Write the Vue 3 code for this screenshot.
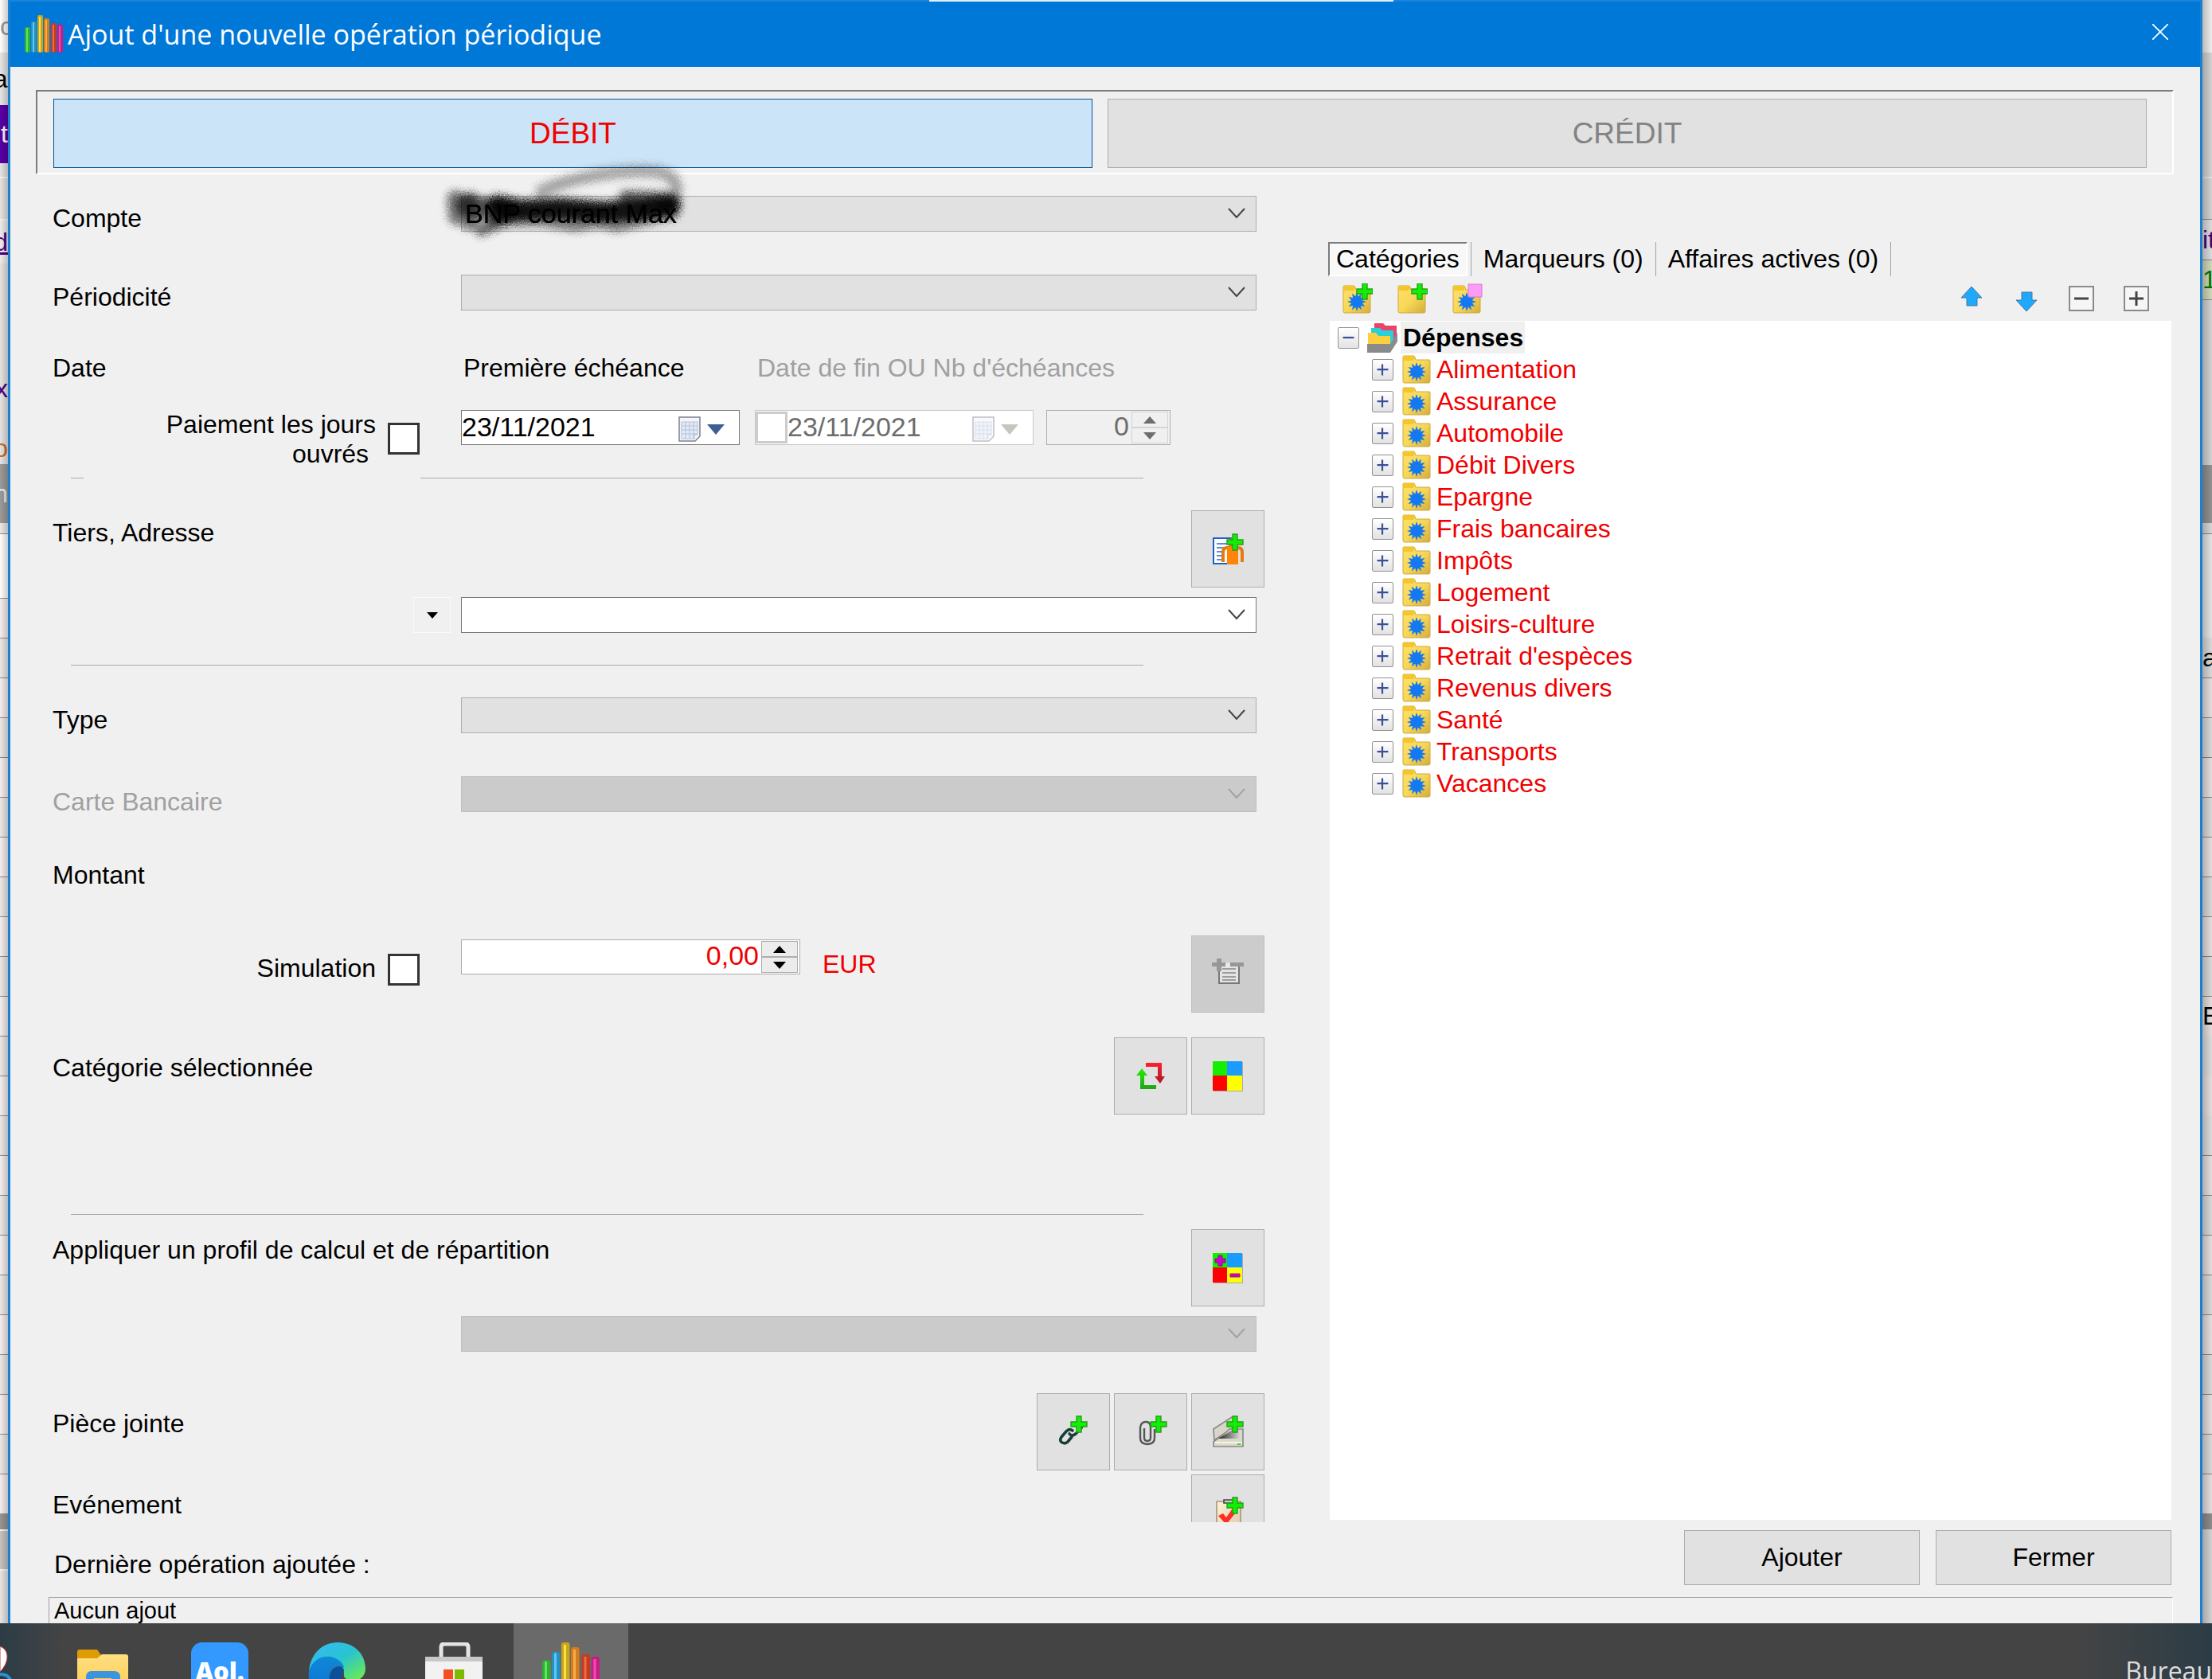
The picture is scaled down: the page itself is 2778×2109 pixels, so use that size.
<script setup>
import { ref } from 'vue'

const categories = [
  'Alimentation', 'Assurance', 'Automobile', 'Débit Divers', 'Epargne',
  'Frais bancaires', 'Impôts', 'Logement', 'Loisirs-culture',
  "Retrait d'espèces", 'Revenus divers', 'Santé', 'Transports', 'Vacances'
]

const account = ref('BNP courant Max')
const firstDate = ref('23/11/2021')
const endDate = ref('23/11/2021')
const count = ref('0')
const amount = ref('0,00')

// Twelve-pointed star used on the category folders
const star = Array.from({ length: 24 }, (_, i) => {
  const r = i % 2 ? 7 : 12
  const a = (i * Math.PI) / 12
  return `${(18 + r * Math.sin(a)).toFixed(1)},${(21 - r * Math.cos(a)).toFixed(1)}`
}).join(' ')

// Slices of the window lying behind the dialog
const rows = (n, first) =>
  Array.from({ length: n }, (_, i) => ({ h: 50, bg: (i + first) % 2 ? '#e9e9e9' : '#f5eeee', line: true }))

const leftEdge = [
  { h: 66, bg: '#ffffff', text: 'c', color: '#999', start: true },
  { h: 66, bg: '#e6e6e6', text: 'at', color: '#000', mid: true },
  { h: 73, bg: '#5a00a6', text: 't', color: '#fff' },
  { h: 17, bg: '#e4e4e4' },
  { h: 53, bg: '#e4e4e4', light: true },
  { h: 56, bg: '#ececec', text: 'd', color: '#4b0082', under: true, light: true },
  { h: 129, bg: '#e4e4e4' },
  { h: 56, bg: '#e4e4e4', text: 'x', color: '#4b0082' },
  { h: 27, bg: '#e4e4e4' },
  { h: 40, bg: '#e4e4e4', text: 'o', color: '#d2691e' },
  { h: 74, bg: '#9b9b9b', text: 'n', color: '#eee' },
  { h: 13, bg: '#e9e9e9' },
  { h: 81, bg: '#ffffff', line: true },
  ...rows(23, 0),
  { h: 20, bg: '#969696' },
  { h: 50, bg: '#c4c4c4', light: true },
  { h: 67, bg: '#e6e6e6', light: true }
]

const rightEdge = [
  { h: 66, bg: '#ffffff' },
  { h: 156, bg: '#e2e2e2' },
  { h: 53, bg: '#e2e2e2', light: true },
  { h: 51, bg: '#ececec', text: 'it', color: '#4b0082', line: true },
  { h: 50, bg: '#dde8c6', text: '1', color: '#008000', line: true },
  { h: 208, bg: '#e2e2e2', line: true },
  { h: 73, bg: '#9b9b9b' },
  { h: 13, bg: '#e6e6e6' },
  { h: 131, bg: '#f4f4f4', line: true },
  { h: 50, bg: '#e9e9e9', text: 'a', color: '#000' },
  ...rows(8, 0),
  { h: 50, bg: '#f5eeee', text: 'E', color: '#000', line: true },
  { h: 50, bg: '#ececec' },
  { h: 50, bg: '#f5eeee' },
  { h: 50, bg: '#ececec' },
  ...rows(9, 0),
  { h: 20, bg: '#969696' },
  { h: 117, bg: '#e2e2e2' }
]
</script>

<template>
  <svg class="defs" aria-hidden="true">
    <defs>
      <linearGradient id="gFolder" x1="0" y1="0" x2="1" y2="1">
        <stop offset="0" stop-color="#ffe06a" /><stop offset=".5" stop-color="#f8d858" /><stop offset="1" stop-color="#d3ad3c" />
      </linearGradient>
      <linearGradient id="gRed" x1="0" y1="0" x2="0" y2="1">
        <stop offset="0" stop-color="#ff2030" /><stop offset="1" stop-color="#a81828" />
      </linearGradient>
      <linearGradient id="gGreen" x1="0" y1="0" x2="0" y2="1">
        <stop offset="0" stop-color="#22f000" /><stop offset="1" stop-color="#20a418" />
      </linearGradient>
      <linearGradient id="gScan" x1="0" y1="0" x2="1" y2="0">
        <stop offset="0" stop-color="#222" /><stop offset="1" stop-color="#ddd" />
      </linearGradient>
      <linearGradient id="gPaper" x1="0" y1="0" x2="1" y2="1">
        <stop offset="0" stop-color="#fff4d8" /><stop offset="1" stop-color="#d9c9a8" />
      </linearGradient>
      <linearGradient id="gEdgeA" x1="0" y1="0" x2="1" y2="1">
        <stop offset="0" stop-color="#38b8f8" /><stop offset=".5" stop-color="#28c4d0" /><stop offset="1" stop-color="#78f040" />
      </linearGradient>
      <linearGradient id="gEdgeB" x1="0" y1="0" x2="0" y2="1">
        <stop offset="0" stop-color="#1088d8" /><stop offset="1" stop-color="#0a70d0" />
      </linearGradient>
      <linearGradient id="gTask" x1="0" y1="0" x2="0" y2="1">
        <stop offset="0" stop-color="#ffdf80" /><stop offset="1" stop-color="#fbc94b" />
      </linearGradient>
      <filter id="fScribble" x="-10%" y="-30%" width="120%" height="160%">
        <feGaussianBlur stdDeviation="5" result="b" />
        <feTurbulence type="fractalNoise" baseFrequency=".7" numOctaves="2" seed="4" />
        <feDisplacementMap in="b" scale="12" xChannelSelector="R" yChannelSelector="G" />
      </filter>
    </defs>
    <symbol id="plus" viewBox="0 0 22 22">
      <path d="M8 1h6v7h7v6h-7v7H8v-7H1V8h7z" fill="#12ee04" stroke="#22a01a" stroke-width="1.4" />
    </symbol>
    <symbol id="folder" viewBox="0 0 36 36">
      <path d="M1 2q0-1 1-1h12q2 0 2 2l1 3h17q1 0 1 1v26q0 2-2 2H3q-2 0-2-2z" fill="url(#gFolder)" stroke="#cfa93c" />
      <path d="M1 2q0-1 1-1h12q2 0 2 2l-2 4H1z" fill="#f3c62c" />
    </symbol>
    <symbol id="catFolder" viewBox="0 0 36 36">
      <use href="#folder" width="36" height="36" />
      <polygon :points="star" fill="#1478f0" />
    </symbol>
    <symbol id="bars" viewBox="0 0 48 48">
      <rect x="0" y="15" width="7" height="32" rx="2" fill="#2fae38" /><rect x="2" y="16" width="2" height="30" fill="#5fe45a" />
      <rect x="8" y="8" width="7" height="39" rx="2" fill="#2690c4" /><rect x="10" y="9" width="2" height="37" fill="#5cc8f4" />
      <rect x="16" y="0" width="7" height="47" rx="2" fill="#c9a51c" /><rect x="18" y="2" width="2" height="44" fill="#f8e04c" />
      <rect x="24" y="4" width="7" height="43" rx="2" fill="#d67c1c" /><rect x="26" y="6" width="2" height="40" fill="#f9ac48" />
      <rect x="33" y="10" width="7" height="37" rx="2" fill="#c43c20" /><rect x="35" y="12" width="2" height="34" fill="#f06a44" />
      <rect x="41" y="12" width="7" height="35" rx="2" fill="#c81c84" /><rect x="43" y="14" width="2" height="32" fill="#ee4cb0" />
    </symbol>
    <symbol id="chevron" viewBox="0 0 24 16">
      <path d="M2 2l10 11L22 2" fill="none" stroke="currentColor" stroke-width="2" />
    </symbol>
    <symbol id="calendar" viewBox="0 0 28 32">
      <path d="M1 1h26v24l-6 6H1z" fill="#f2f5fb" stroke="#7d828c" stroke-width="1.5" />
      <path d="M4 7h20v16h-4v5H4zM4 12h20M4 17h20M4 22h20M9 7v21M14 7v21M19 7v21" fill="#e4eaf6" stroke="#b4c1da" stroke-width="1.1" />
    </symbol>
    <symbol id="squares" viewBox="0 0 40 40">
      <path d="M2 2h37v37H2z" fill="#aaa" />
      <path d="M1 1h18v18H1z" fill="#14ee00" /><path d="M19 1h19v18H19z" fill="#1a9cff" />
      <path d="M1 19h18v19H1z" fill="#f00" /><path d="M19 19h19v19H19z" fill="#ff0" />
    </symbol>
  </svg>

  <div class="desktop">
    <div class="workspace">
      <div class="edge edge-left" aria-hidden="true">
        <div v-for="(s, i) in leftEdge" :key="i" class="slice" :class="{ line: s.line, light: s.light, under: s.under, start: s.start, mid: s.mid }"
          :style="{ height: s.h + 'px', background: s.bg, color: s.color }">{{ s.text }}</div>
      </div>

      <main class="window">
        <header class="titlebar">
          <svg class="app-icon"><use href="#bars" /></svg>
          <h1>Ajout d'une nouvelle opération périodique</h1>
          <button class="close" aria-label="Fermer la fenêtre">
            <svg width="20" height="20" viewBox="0 0 20 20"><path d="M0 0l20 20M20 0L0 20" stroke="#fff" stroke-width="1.8" /></svg>
          </button>
        </header>

        <div class="kind">
          <button class="kind-btn active">DÉBIT</button>
          <button class="kind-btn">CRÉDIT</button>
        </div>

        <div class="body">
          <form class="form" @submit.prevent>
            <div class="row first">
              <label for="account">Compte</label>
              <div class="combo">
                <select id="account" v-model="account"><option>BNP courant Max</option></select>
                <svg class="chev"><use href="#chevron" /></svg>
                <svg class="scribble" viewBox="0 0 340 130" aria-hidden="true">
                  <g filter="url(#fScribble)" fill="none" stroke="#000" stroke-linecap="round" stroke-linejoin="round">
                    <path d="M140 50C180 32 230 25 270 25c32 0 44 10 38 34" stroke-width="15" opacity=".32" />
                    <path d="M32 60l2 22M50 62v26" stroke-width="22" opacity=".5" />
                    <path d="M64 100l40-18" stroke-width="14" opacity=".55" />
                    <path d="M80 86l60 0 42 8 30-6 22 6 50-12 20-4" stroke-width="16" opacity=".42" />
                    <path d="M46 68l50 8" stroke-width="28" opacity=".6" />
                    <path d="M84 68l30 6 50-2 50 4 50-2 38-6" stroke-width="26" opacity=".92" />
                    <path d="M246 58l52 2v14" stroke-width="18" opacity=".6" />
                  </g>
                </svg>
                <span class="over" aria-hidden="true">{{ account }}</span>
              </div>
            </div>

            <div class="row gap-l">
              <label for="period">Périodicité</label>
              <div class="combo">
                <select id="period"><option></option></select>
                <svg class="chev"><use href="#chevron" /></svg>
              </div>
            </div>

            <div class="row heads gap-l">
              <span>Date</span>
              <div class="dates">
                <label class="date-col" for="first">Première échéance</label>
                <label class="dim" for="end">Date de fin OU Nb d'échéances</label>
              </div>
            </div>

            <div class="row gap-date">
              <div class="check">
                <label for="workdays">Paiement les jours<br>ouvrés&nbsp;</label>
                <input id="workdays" type="checkbox">
              </div>
              <div class="dates">
                <div class="date date-col">
                  <input id="first" v-model="firstDate" type="text">
                  <svg class="cal"><use href="#calendar" /></svg>
                  <svg class="tri" viewBox="0 0 22 13"><path d="M0 0h22L11 13z" fill="#3f5f94" /></svg>
                </div>
                <div class="date date-col off">
                  <input type="checkbox" aria-label="Activer la date de fin" disabled>
                  <input id="end" v-model="endDate" type="text" disabled>
                  <svg class="cal"><use href="#calendar" /></svg>
                  <svg class="tri" viewBox="0 0 22 13"><path d="M0 0h22L11 13z" fill="#c6c6c0" /></svg>
                </div>
                <div class="spin small">
                  <input v-model="count" type="text" aria-label="Nombre d'échéances" disabled>
                  <div class="steps">
                    <button type="button" aria-label="Plus" disabled><svg viewBox="0 0 16 9"><path d="M8 0l8 9H0z" /></svg></button>
                    <button type="button" aria-label="Moins" disabled><svg viewBox="0 0 16 9"><path d="M0 0h16L8 9z" /></svg></button>
                  </div>
                </div>
              </div>
            </div>

            <div class="rule split"><span></span><span></span></div>

            <div class="row tiers gap-m">
              <label for="payee">Tiers, Adresse</label>
              <div class="tools">
                <button type="button" class="tool" aria-label="Ajouter un tiers">
                  <svg viewBox="0 0 40 40">
                    <path d="M2 6h22v32H2z" fill="#fff" stroke="#1c62c4" stroke-width="2" />
                    <path d="M6 13h14M6 18h14M6 23h10M6 28h10M6 33h8" stroke="#2468c8" stroke-width="1.6" />
                    <path d="M14 36V24q0-6 5-6h14q5 0 5 6v12" fill="none" stroke="#e87a0c" stroke-width="4" />
                    <circle cx="26" cy="12" r="6" fill="#e87a0c" /><path d="M19 17h14v22H19z" fill="#ff8408" />
                    <use href="#plus" x="18" y="0" width="22" height="22" />
                  </svg>
                </button>
              </div>
            </div>

            <div class="row gap-s">
              <button type="button" class="mini" aria-label="Options du tiers">
                <svg width="14" height="8" viewBox="0 0 14 8"><path d="M0 0h14L7 8z" /></svg>
              </button>
              <div class="combo white">
                <select id="payee"><option></option></select>
                <svg class="chev"><use href="#chevron" /></svg>
              </div>
            </div>

            <div class="rule gap-m"></div>

            <div class="row gap-m">
              <label for="type">Type</label>
              <div class="combo">
                <select id="type"><option></option></select>
                <svg class="chev"><use href="#chevron" /></svg>
              </div>
            </div>

            <div class="row card gap-l">
              <label for="card" class="dim">Carte Bancaire</label>
              <div class="combo gray">
                <select id="card" disabled><option></option></select>
                <svg class="chev"><use href="#chevron" /></svg>
              </div>
            </div>

            <div class="row heads gap-xl"><label for="amount">Montant</label></div>

            <div class="row gap-amount">
              <div class="check sim">
                <label for="sim">Simulation</label>
                <input id="sim" type="checkbox">
              </div>
              <div class="amount">
                <div class="spin money">
                  <input id="amount" v-model="amount" type="text">
                  <div class="steps">
                    <button type="button" aria-label="Augmenter"><svg viewBox="0 0 16 9"><path d="M8 0l8 9H0z" /></svg></button>
                    <button type="button" aria-label="Diminuer"><svg viewBox="0 0 16 9"><path d="M0 0h16L8 9z" /></svg></button>
                  </div>
                </div>
                <span class="cur">EUR</span>
                <button type="button" class="tool off" aria-label="Détail du montant" disabled>
                  <svg viewBox="0 0 40 40">
                    <path d="M9 8h25v23H9z" fill="#e4e4e4" stroke="#777" stroke-width="2" />
                    <path d="M13 13h17M13 18h17M13 23h17M13 27h17" stroke="#858585" stroke-width="1.6" />
                    <path d="M23 5h17v5H23zM6 0h6v5h5v5h-5v6H6v-6H0V5h6z" fill="#979797" />
                    <circle cx="20" cy="8" r="3" fill="#e8e8e8" />
                  </svg>
                </button>
              </div>
            </div>

            <div class="row cat gap-tool">
              <span>Catégorie sélectionnée</span>
              <div class="tools">
                <button type="button" class="tool" aria-label="Permuter">
                  <svg viewBox="0 0 40 40">
                    <path d="M9 10l7 9h-4v12h15v5H7V19H2z" fill="url(#gGreen)" />
                    <path d="M14 3h20v17h4l-6 9-7-9h4V8H14z" fill="url(#gRed)" />
                  </svg>
                </button>
                <button type="button" class="tool" aria-label="Répartir"><svg><use href="#squares" /></svg></button>
              </div>
            </div>

            <div class="rule gap-rule"></div>

            <div class="row profile">
              <label for="profile">Appliquer un profil de calcul et de répartition</label>
              <div class="tools">
                <button type="button" class="tool" aria-label="Profils">
                  <svg viewBox="0 0 40 40">
                    <use href="#squares" width="40" height="40" />
                    <path d="M8 4h5v4h4v5h-4v4H8v-4H4V8h4z" fill="#d000d0" stroke="#7a1a7a" />
                    <path d="M23 27h12v4H23z" fill="#d000d0" stroke="#a02060" />
                  </svg>
                </button>
              </div>
            </div>

            <div class="row gap-s">
              <div class="combo gray only">
                <select id="profile" disabled><option></option></select>
                <svg class="chev"><use href="#chevron" /></svg>
              </div>
            </div>

            <div class="row cat gap-l">
              <span>Pièce jointe</span>
              <div class="tools">
                <button type="button" class="tool" aria-label="Ajouter un lien">
                  <svg viewBox="0 0 40 40">
                    <g fill="none" stroke="#173f36" stroke-width="3.6" stroke-linecap="round">
                      <path d="M18 26l-5 6q-3 3-7 1t-1-7l6-7q4-4 8-1" /><path d="M15 22q3 4 8 0l6-6q3-4 1-8" />
                    </g>
                    <use href="#plus" x="16" y="-1" width="22" height="22" />
                  </svg>
                </button>
                <button type="button" class="tool" aria-label="Ajouter un fichier">
                  <svg viewBox="0 0 40 40">
                    <path d="M12 15v12q0 4 4 4t4-4V14q0-7-6-7t-7 7v13q0 8 9 8t9-8V16" fill="none" stroke="#555" stroke-width="2.4" />
                    <use href="#plus" x="19" y="-1" width="22" height="22" />
                  </svg>
                </button>
                <button type="button" class="tool" aria-label="Numériser">
                  <svg viewBox="0 0 40 40">
                    <path d="M2 16L25 1h4v12L3 30z" fill="#d8d6c8" stroke="#888" stroke-width="1.6" />
                    <path d="M2 32l16-12 4-4h17v22H2z" fill="#d9d8c9" stroke="#888" stroke-width="1.6" />
                    <path d="M8 28l18-11h10v11z" fill="url(#gScan)" />
                    <path d="M4 33h34" stroke="#f4f4ea" stroke-width="2" /><path d="M32 34h4v2h-4z" fill="#2be61c" />
                    <use href="#plus" x="18" y="-1" width="22" height="22" />
                  </svg>
                </button>
              </div>
            </div>

            <div class="row cat event">
              <span>Evénement</span>
              <div class="tools">
                <button type="button" class="tool" aria-label="Ajouter un événement">
                  <svg viewBox="0 0 40 40">
                    <path d="M6 5h30v35H6z" fill="url(#gPaper)" stroke="#a89478" stroke-width="1.6" />
                    <path d="M15 3h14v4H15z" fill="#ccc" stroke="#444" stroke-width="1.6" />
                    <path d="M8 23l6-3 4 5 7-10 5 4-12 15z" fill="#ff2c28" />
                    <use href="#plus" x="18" y="-1" width="22" height="22" />
                  </svg>
                </button>
              </div>
            </div>

            <p class="last">Dernière opération ajoutée :</p>
          </form>

          <section class="panel">
            <nav class="tabs">
              <button class="tab current">Catégories</button>
              <button class="tab">Marqueurs (0)</button>
              <button class="tab">Affaires actives (0)</button>
            </nav>

            <div class="toolbar">
              <button aria-label="Nouvelle catégorie">
                <svg class="ti" viewBox="0 0 38 38"><use href="#catFolder" y="2" width="36" height="36" /><use href="#plus" x="17" y="-1" width="22" height="22" /></svg>
              </button>
              <button aria-label="Nouvelle sous-catégorie">
                <svg class="ti" viewBox="0 0 38 38"><use href="#folder" y="2" width="36" height="36" /><use href="#plus" x="17" y="-1" width="22" height="22" /></svg>
              </button>
              <button aria-label="Modifier la catégorie">
                <svg class="ti" viewBox="0 0 38 38"><use href="#catFolder" y="2" width="36" height="36" /><path d="M20 1h17v16H20z" fill="#fc9cf8" stroke="#d27acb" /></svg>
              </button>
              <div class="right-tools">
                <button aria-label="Monter"><svg viewBox="0 0 32 32"><path d="M16 1l13 14h-6v10H10V15H3z" fill="#20a8fc" stroke="#4a7896" /></svg></button>
                <button aria-label="Descendre"><svg viewBox="0 0 32 32"><path d="M16 32L3 18h7V8h13v10h6z" fill="#20a8fc" stroke="#4a7896" /></svg></button>
                <button aria-label="Tout replier"><svg viewBox="0 0 32 32"><path d="M1 1h30v30H1z" fill="#f6f6f6" stroke="#8a8a8a" stroke-width="2" /><path d="M7 16h18" stroke="#444" stroke-width="3" /></svg></button>
                <button aria-label="Tout déplier"><svg viewBox="0 0 32 32"><path d="M1 1h30v30H1z" fill="#f6f6f6" stroke="#8a8a8a" stroke-width="2" /><path d="M7 16h18M16 7v18" stroke="#444" stroke-width="3" /></svg></button>
              </div>
            </div>

            <div class="tree">
              <div class="node root">
                <button class="exp" aria-label="Replier"><svg viewBox="0 0 27 27"><path d="M6 13h15" stroke="#3a4f98" stroke-width="2.4" /></svg></button>
                <svg class="root-icon" viewBox="0 0 38 38">
                  <path d="M9 1h11l3 3h14v20H9z" fill="#ea4468" /><path d="M5 7h11l3 3h14v18H5z" fill="#2ad0d8" />
                  <path d="M1 13h10l3 4h15v11H1z" fill="#fbd03c" /><path d="M0 27h29l9-14v11l-9 14H0z" fill="#8a8a8a" />
                </svg>
                <strong>Dépenses</strong>
              </div>
              <ul>
                <li v-for="c in categories" :key="c" class="node">
                  <button class="exp" :aria-label="'Déplier ' + c"><svg viewBox="0 0 27 27"><path d="M6 13h15M13 6v15" stroke="#3a4f98" stroke-width="2.4" /></svg></button>
                  <svg class="cat-icon"><use href="#catFolder" /></svg>
                  <span>{{ c }}</span>
                </li>
              </ul>
            </div>

            <div class="actions">
              <button>Ajouter</button>
              <button>Fermer</button>
            </div>
          </section>
        </div>

        <div class="status">Aucun ajout</div>
      </main>

      <div class="edge edge-right" aria-hidden="true">
        <div v-for="(s, i) in rightEdge" :key="i" class="slice" :class="{ line: s.line, light: s.light }"
          :style="{ height: s.h + 'px', background: s.bg, color: s.color }">{{ s.text }}</div>
      </div>
    </div>

    <footer class="taskbar">
      <svg class="people" viewBox="0 0 18 71" aria-hidden="true">
        <path d="M0 29c12 4 12 20 0 32z" fill="#fff" stroke="#c33" /><path d="M0 64q12 0 14 10" fill="none" stroke="#2a90d8" stroke-width="4" />
      </svg>
      <button class="task" aria-label="Explorateur">
        <svg viewBox="0 0 72 72"><path d="M4 12q0-3 3-3h22l5 7-5 7H4z" fill="#dd9c06" /><path d="M4 20h25l6-5h30q3 0 3 3v54H4z" fill="url(#gTask)" /><path d="M15 44q0-8 7-8h28q8 0 8 8v28H15z" fill="#3b94dc" /><path d="M25 45h22v4H25z" fill="#f9c84c" /></svg>
      </button>
      <button class="task" aria-label="Aol"><span class="aol">Aol.</span></button>
      <button class="task" aria-label="Edge">
        <svg viewBox="0 0 72 72">
          <path d="M1 36C3 14 18 0 37 0c20 0 35 14 35 33 0 8-6 15-14 15-8 0-14-2-13-8 0-8-4-14-12-17C20 18 6 24 1 36z" fill="url(#gEdgeA)" />
          <path d="M1 36c4-13 15-20 27-18 11 2 17 10 17 14-12-6-20 5-18 17 1 10 6 18 14 23H36C14 72-2 56 1 36z" fill="url(#gEdgeB)" />
          <path d="M27 49c-1-9 4-18 12-18 4 0 6 2 6 5-6 6-5 22 8 28l-12 8c-8-4-13-13-14-23z" fill="#0c509c" />
        </svg>
      </button>
      <button class="task" aria-label="Store">
        <svg viewBox="0 0 72 72"><path d="M20 22V6q0-4 4-4h26q4 0 4 4v16" fill="none" stroke="#e4e4e4" stroke-width="5" /><path d="M0 18h72v54H0z" fill="#f2f2f2" /><path d="M0 18h72v6H0z" fill="#c8c8c8" /><path d="M23 34h12v12H23z" fill="#f25022" /><path d="M37 34h12v12H37z" fill="#7fba00" /><path d="M23 48h12v12H23z" fill="#00a4ef" /><path d="M37 48h12v12H37z" fill="#ffb900" /></svg>
      </button>
      <button class="task on" aria-label="Comptes"><svg><use href="#bars" /></svg></button>
      <span class="desk">Bureau</span>
    </footer>
  </div>
</template>

<style>
body { margin: 0; background: #444; }
</style>

<style scoped>
* { box-sizing: border-box; }
.defs { position: absolute; width: 0; height: 0; }
.desktop {
  min-height: 100vh; display: flex; flex-direction: column; overflow: hidden;
  font: 32px/37px "Liberation Sans", Arial, sans-serif; color: #000;
}
button, input, select { font: inherit; color: inherit; margin: 0; padding: 0; border: 0; border-radius: 0; background: none; }
button { display: flex; align-items: center; justify-content: center; }
svg { display: block; flex: none; }
.workspace { flex: 1; display: flex; position: relative; }
.workspace::before { content: ""; position: absolute; top: 0; left: 42%; width: 21%; height: 2px; background: #e4eef6; }

.edge { position: relative; overflow: hidden; background: #e2e2e2; }
.edge-left { width: 10px; }
.edge-right { width: 12px; }
.edge::after { content: ""; position: absolute; inset: 0; background: linear-gradient(90deg, #0000, #0003); }
.edge-right::after { background: linear-gradient(90deg, #0004, #0001); }
.slice { display: flex; align-items: center; overflow: hidden; }
.edge-left .slice { justify-content: flex-end; }
.edge-left .slice.start { justify-content: flex-start; }
.edge-left .slice.mid { justify-content: center; }
.line { border-top: 1px solid #8f8f8f; }
.light { border-top: 2px solid #f6f6f6; }
.under { text-decoration: underline; }

.window { flex: 1; min-width: 0; background: #f0f0f0; border: 3px solid #1c80d0; border-width: 0 3px; display: flex; flex-direction: column; }
.titlebar { height: 84px; background: #0078d8; border-top: 2px solid #1a84da; display: flex; align-items: center; padding-left: 18px; color: #fff; }
.app-icon { width: 48px; height: 48px; }
h1 { margin: 0 0 0 6px; font: 34px/44px "Open Sans", "Noto Sans", sans-serif; flex: 1; }
.close { width: 100px; height: 76px; align-self: flex-start; }

.kind { margin: 29px 33px 0 32px; padding: 9px 32px 6px 20px; border: 2px solid; border-color: #7c7c7c #fff #fff #7c7c7c; display: flex; gap: 19px; }
.kind-btn { flex: 1; height: 87px; font-size: 37px; background: #e1e1e1; border: 1px solid #adadad; color: #838383; }
.kind-btn.active { background: #cce4f7; border-color: #005499; color: #f00000; }

.body { display: grid; grid-template-columns: minmax(0, 1522fr) minmax(0, 1059fr); gap: 80px; padding: 0 36px 0 53px; }
.form { padding: 27px 0 7px; }
.row { display: grid; grid-template-columns: 513px minmax(0, 1fr); align-items: start; }
.row > label, .row > span { padding-top: 10px; white-space: nowrap; }
.heads > label, .heads > span { padding-top: 0; }
.card > label { padding-top: 14px; }
.cat > span { padding-top: 20px; }
.profile > label { padding-top: 8px; }
.gap-s { margin-top: 12px; }
.gap-m { margin-top: 40px; }
.gap-l { margin-top: 52px; }
.gap-xl { margin-top: 55px; }
.gap-date { margin-top: 34px; }
.gap-amount { margin-top: 57px; }
.gap-tool { margin-top: 31px; }
.profile { margin-top: 18px; }
.rule { height: 1px; margin-left: 23px; margin-right: 152px; background: #aaa; }
.rule.gap-rule { margin-top: 125px; }
.rule.split { margin-top: 11px; background: none; display: flex; gap: 423px; }
.split span { width: 16px; background: #aaa; }
.split span:last-child { flex: 1; }

.combo { position: relative; height: 45px; margin-right: 10px; }
.combo.only { grid-column: 2; }
select { display: block; width: 100%; height: 100%; appearance: none; background: #e1e1e1; border: 1px solid #adadad; padding-left: 4px; font-size: 34px; opacity: 1; }
.white select { background: #fff; border-color: #7a7a7a; }
.gray select { background: #cbcbcb; border-color: #bfbfbf; }
.chev { position: absolute; right: 13px; top: 14px; width: 24px; height: 16px; color: #444; pointer-events: none; }
.gray .chev { color: #a2a2a2; }
.scribble { position: absolute; left: -39px; top: -56px; width: 340px; height: 130px; overflow: visible; pointer-events: none; }
.over { position: absolute; left: 5px; top: 3px; font-size: 34px; line-height: 39px; pointer-events: none; white-space: nowrap; }

.dates { display: flex; gap: 19px; padding-left: 0; white-space: nowrap; }
.dates label { padding-left: 3px; }
.date-col { width: 350px; }
.dim { color: #a0a0a0; }
.date { height: 44px; background: #fff; border: 1px solid #7a7a7a; display: flex; align-items: center; padding-right: 18px; }
.date input[type="text"] { flex: 1; min-width: 0; font-size: 34px; padding-bottom: 2px; }
.date .cal { width: 28px; height: 34px; margin-right: 8px; margin-top: 4px; }
.tri { width: 22px; height: 13px; margin-top: 4px; }
.date.off { border-color: #c8c8c8; color: #6d6d6d; }
.date.off .cal { opacity: .5; }
.check { display: flex; justify-content: flex-end; gap: 15px; text-align: right; padding-right: 52px; }
input[type="checkbox"] { appearance: none; flex: none; width: 40px; height: 40px; background: #fff; border: 3px solid #333; }
.check input { margin-top: 16px; }
.sim { padding-top: 23px; }
.sim input { margin-top: 0; }
.date.off input[type="checkbox"] { border-color: #ccc; }

.spin { display: flex; height: 44px; border: 1px solid #adadad; background: #fff; padding: 1px 2px 1px 0; }
.spin input { flex: 1; min-width: 0; text-align: right; font-size: 34px; padding: 0 3px 3px 0; }
.spin.small { width: 156px; margin-left: -3px; background: #f0f0f0; color: #6d6d6d; }
.spin.money { width: 426px; margin-top: 5px; }
.money input { color: #f00000; }
.steps { width: 46px; display: flex; flex-direction: column; }
.steps button { flex: 1; border: 1px solid #adadad; background: #ececec; }
.small .steps button { border-color: #d4d4d4; background: #f0f0f0; }
.steps svg { width: 16px; height: 9px; fill: currentColor; }
.amount { display: flex; align-items: flex-start; }
.cur { margin: 18px auto 0 28px; color: #f00000; }

.tools { display: flex; justify-content: flex-end; gap: 5px; }
.tool { width: 92px; height: 97px; background: #e1e1e1; border: 1px solid #adadad; flex: none; }
.tool svg { width: 40px; height: 40px; overflow: visible; }
.tool.off { background: #cccccc; border-color: #bfbfbf; }
.mini { width: 47px; height: 45px; border: 1px solid #fafafa; justify-self: end; margin-right: 13px; }
.event { margin-top: 5px; height: 60px; overflow: hidden; }
.last { margin: 35px 0 0 2px; }

.panel { display: flex; flex-direction: column; padding-top: 85px; }
.tabs { display: flex; height: 43px; white-space: nowrap; }
.tab { border-right: 1px solid #a0a0a0; padding: 0 15px 1px; }
.tab.current { border: 2px solid; border-color: #7c7c7c #fff #fff #7c7c7c; background: #f8f8f8; padding: 0 8px 1px; }
.tab.current + .tab { border-left: 1px solid #a0a0a0; margin-left: 4px; }
.toolbar { display: flex; align-items: center; height: 56px; gap: 31px; padding: 0 28px 0 18px; }
.ti { width: 38px; height: 38px; }
.right-tools { margin-left: auto; display: flex; gap: 37px; }
.right-tools svg { width: 32px; height: 32px; }
.tree { flex: 1; margin-left: 2px; background: #fff; padding: 1px 0 0 10px; }
.tree ul { list-style: none; margin: 0; padding: 0 0 0 43px; color: #f00000; }
.node { display: flex; align-items: center; height: 40px; line-height: 40px; white-space: nowrap; }
.exp { width: 27px; height: 27px; border: 1px solid #919191; border-radius: 2px; background: linear-gradient(#fff, #e2e2e2); }
.exp svg { width: 25px; height: 25px; }
.cat-icon { width: 36px; height: 36px; margin: 0 7px 0 11px; }
.root-icon { width: 38px; height: 38px; margin: 0 4px 0 10px; }
.root strong { background: #f0f0f0; padding: 0 2px 0 3px; }
.actions { display: flex; justify-content: flex-end; gap: 20px; margin-top: 13px; }
.actions button { width: 296px; height: 69px; background: #e1e1e1; border: 1px solid #adadad; }
.status { margin: 15px 34px 0 48px; border: 1px solid #a0a0a0; border-width: 1px 1px 0; border-right-color: #fff; padding-left: 6px; height: 33px; font-size: 29px; line-height: 33px; }

.taskbar { height: 71px; background: linear-gradient(90deg, #2c3c46, #444 80px, #444 94%, #2c3c46); display: flex; gap: 3px; overflow: hidden; }
.people { width: 18px; height: 71px; margin-right: 36px; }
.task { width: 144px; height: 120px; padding-top: 24px; align-items: flex-start; flex: none; }
.task svg { width: 72px; height: 72px; }
.task.on { background: #6a6a6a; }
.aol { width: 72px; height: 72px; border-radius: 14px; background: #3399ff; color: #fff; font: 800 31px/72px "Open Sans", sans-serif; text-align: center; }
.desk { margin-left: auto; padding-top: 38px; color: #ddd; font: 32px/44px "Open Sans", sans-serif; }
</style>
